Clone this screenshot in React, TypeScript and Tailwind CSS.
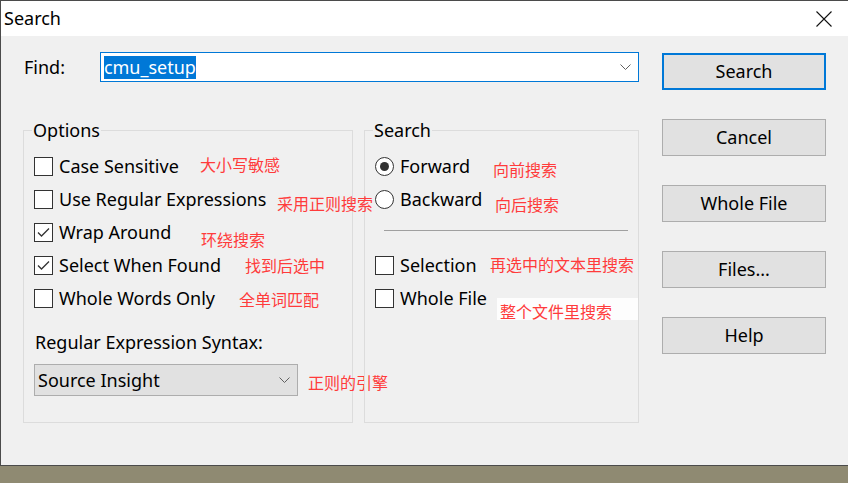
import React from "react";

const RED = "text-[#ff3b3b]";
const CJK = "font-['Noto_Sans_CJK_SC',sans-serif] text-[16px] leading-[16px]";

function Chevron() {
    return (
        <svg width="11" height="6" viewBox="0 0 11 6" className="shrink-0">
            <path d="M0.5 0.5 L5.5 5.5 L10.5 0.5" fill="none" stroke="#606060" strokeWidth="1" />
        </svg>
    );
}

function CheckBox({ checked }: { checked?: boolean }) {
    return (
        <span className="flex h-[19px] w-[19px] shrink-0 items-center justify-center border border-[#333] bg-white">
            {checked && (
                <svg width="17" height="17" viewBox="0 0 17 17">
                    <path d="M3 8.5 L6.5 12 L14 4.5" fill="none" stroke="#333" strokeWidth="1.3" />
                </svg>
            )}
        </span>
    );
}

function Radio({ checked }: { checked?: boolean }) {
    return (
        <span className="flex h-[19px] w-[19px] shrink-0 items-center justify-center rounded-full border border-[#333] bg-white">
            {checked && <span className="h-[9px] w-[9px] rounded-full bg-[#333]" />}
        </span>
    );
}

interface RowProps {
    control: React.ReactNode;
    label: string;
    note?: string;
    noteLeft: string;
    noteTop: string;
    noteClass?: string;
}

function Row({ control, label, note, noteLeft, noteTop, noteClass = "" }: RowProps) {
    return (
        <div className="relative flex h-[33px] items-center">
            {control}
            <span className="ml-[6px] whitespace-nowrap">{label}</span>
            {note && (
                <span className={`absolute whitespace-nowrap ${noteLeft} ${noteTop} ${CJK} ${RED} ${noteClass}`}>
                    {note}
                </span>
            )}
        </div>
    );
}

function DialogButton({ label, primary }: { label: string; primary?: boolean }) {
    return (
        <button
            className={`flex h-[37px] w-[164px] items-center justify-center bg-[#e1e1e1] ${
                primary ? "border-2 border-[#0078d7]" : "border border-[#adadad]"
            }`}
        >
            {label}
        </button>
    );
}

export default function App() {
    return (
        <div className="flex h-[483px] w-[848px] flex-col overflow-hidden bg-[#8f8a72] font-['Noto_Sans',sans-serif] text-[18px] text-black">
            <div className="flex h-[466px] shrink-0 flex-col border-y border-l border-[#4b4b4b] bg-[#f0f0f0]">
                {/* title bar */}
                <div className="flex h-[35px] shrink-0 items-center justify-between bg-white pl-[3px] pr-[16px]">
                    <span>Search</span>
                    <svg width="16" height="16" viewBox="0 0 16 16">
                        <path d="M0.5 0.5 L15.5 15.5 M15.5 0.5 L0.5 15.5" stroke="#111" strokeWidth="1.1" />
                    </svg>
                </div>

                <div className="flex">
                    {/* left column */}
                    <div className="ml-[22px] w-[616px] pt-[16px]">
                        <div className="flex h-[30px] items-center">
                            <span className="w-[77px] pl-px">Find:</span>
                            <div className="flex h-[30px] w-[540px] items-center justify-between border border-[#0078d7] bg-white pl-[3px] pr-[7px]">
                                <span className="bg-[#0078d7] leading-[23px] text-white">cmu_setup</span>
                                <Chevron />
                            </div>
                        </div>

                        <div className="mt-[38px] flex">
                            {/* Options */}
                            <fieldset className="h-[303px] w-[330px] min-w-0 border border-[#dcdcdc] px-[10px]">
                                <legend className="-ml-[2px] px-px leading-[20px]">Options</legend>
                                <div className="pt-[10px]">
                                    <Row control={<CheckBox />} label="Case Sensitive" note="大小写敏感" noteLeft="left-[166px]" noteTop="top-[6px]" />
                                    <Row control={<CheckBox />} label="Use Regular Expressions" note="采用正则搜索" noteLeft="left-[243px]" noteTop="top-[12px]" noteClass="z-10" />
                                    <Row control={<CheckBox checked />} label="Wrap Around" note="环绕搜索" noteLeft="left-[167px]" noteTop="top-[15px]" />
                                    <Row control={<CheckBox checked />} label="Select When Found" note="找到后选中" noteLeft="left-[211px]" noteTop="top-[8px]" />
                                    <Row control={<CheckBox />} label="Whole Words Only" note="全单词匹配" noteLeft="left-[205px]" noteTop="top-[9px]" />
                                    <div className="mt-[15px] h-[24px] pl-px leading-[24px]">Regular Expression Syntax:</div>
                                    <div className="mt-[10px] flex items-center">
                                        <div className="flex h-[32px] w-[264px] shrink-0 items-center justify-between border border-[#adadad] bg-[#e1e1e1] pl-[3px] pr-[7px]">
                                            <span>Source Insight</span>
                                            <Chevron />
                                        </div>
                                        <span className={`ml-[10px] mt-[3px] whitespace-nowrap ${CJK} ${RED}`}>正则的引擎</span>
                                    </div>
                                </div>
                            </fieldset>

                            {/* Search direction / scope */}
                            <fieldset className="ml-[11px] h-[303px] w-[275px] min-w-0 border border-[#dcdcdc] px-[10px]">
                                <legend className="-ml-[2px] px-px leading-[20px]">Search</legend>
                                <div className="pt-[10px]">
                                    <Row control={<Radio checked />} label="Forward" note="向前搜索" noteLeft="left-[118px]" noteTop="top-[11px]" />
                                    <Row control={<Radio />} label="Backward" note="向后搜索" noteLeft="left-[120px]" noteTop="top-[13px]" />
                                    <div className="h-[33px] pt-[14px]">
                                        <div className="ml-[9px] h-px w-[244px] bg-[#a0a0a0]" />
                                    </div>
                                    <Row control={<CheckBox />} label="Selection" note="再选中的文本里搜索" noteLeft="left-[115px]" noteTop="top-[7px]" />
                                    <div className="relative flex h-[33px] items-center">
                                        <CheckBox />
                                        <span className="ml-[6px] whitespace-nowrap">Whole File</span>
                                        <span className={`absolute left-[122px] top-[16px] h-[22px] w-[141px] bg-[#fdfdfd] pl-[3px] pt-[5px] whitespace-nowrap ${CJK} ${RED}`}>
                                            整个文件里搜索
                                        </span>
                                    </div>
                                </div>
                            </fieldset>
                        </div>
                    </div>

                    {/* buttons */}
                    <div className="ml-[23px] flex w-[164px] flex-col gap-[29px] pt-[17px]">
                        <DialogButton label="Search" primary />
                        <DialogButton label="Cancel" />
                        <DialogButton label="Whole File" />
                        <DialogButton label="Files..." />
                        <DialogButton label="Help" />
                    </div>
                </div>
            </div>
        </div>
    );
}
